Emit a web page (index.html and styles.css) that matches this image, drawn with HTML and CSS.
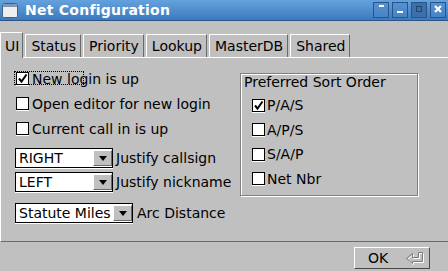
FILE: index.html
```html
<!DOCTYPE html>
<html lang="en">
<head>
    <meta charset="UTF-8">
    <title>Net Configuration</title>
    <link rel="stylesheet" href="styles.css">
</head>
<body>
    <header class="titlebar">
        <svg class="app-icon" width="16" height="15" viewBox="0 0 16 15">
            <rect x="0.5" y="0.5" width="15" height="14" rx="2" fill="#e4e4e4" stroke="#3d5f88"/>
            <rect x="1" y="1" width="14" height="3" fill="#7f97b6"/>
            <rect x="1" y="4" width="14" height="10" rx="1" fill="#eeeeee"/>
        </svg>
        <span class="title">Net Configuration</span>
        <div class="wm-buttons">
            <span class="wm-btn"><svg width="14" height="14"><rect x="5" y="2" width="5" height="2" fill="#fff"/></svg></span>
            <span class="wm-btn"><svg width="14" height="14"><rect x="4" y="8" width="6" height="2" fill="#fff"/></svg></span>
            <span class="wm-btn dim"><svg width="14" height="14"><rect x="4.5" y="3.5" width="5" height="5" fill="#3b6ea6" stroke="#22476f"/></svg></span>
            <span class="wm-btn"><svg width="14" height="14"><path d="M4 3 L10 9 M10 3 L4 9" stroke="#fff" stroke-width="2.2"/></svg></span>
        </div>
    </header>

    <nav class="tabs">
        <span class="tab active">UI</span>
        <span class="tab">Status</span>
        <span class="tab">Priority</span>
        <span class="tab">Lookup</span>
        <span class="tab">MasterDB</span>
        <span class="tab">Shared</span>
    </nav>

    <section class="panel">
        <div class="left">
            <label class="check">
                <span class="focus-ring"></span>
                <span class="box"><svg width="11" height="11"><path d="M2 5.5 L4.5 8.5 L9.5 1.5" fill="none" stroke="#000" stroke-width="2"/></svg></span>
                New login is up
            </label>
            <label class="check"><span class="box"></span>Open editor for new login</label>
            <label class="check"><span class="box"></span>Current call in is up</label>

            <div class="combo-row first">
                <span class="combo"><span class="value">RIGHT</span><span class="drop"><i></i></span></span>
                <span class="combo-label">Justify callsign</span>
            </div>
            <div class="combo-row second">
                <span class="combo"><span class="value">LEFT</span><span class="drop"><i></i></span></span>
                <span class="combo-label">Justify nickname</span>
            </div>
            <div class="combo-row third">
                <span class="combo wide"><span class="value">Statute Miles</span><span class="drop"><i></i></span></span>
                <span class="combo-label">Arc Distance</span>
            </div>
        </div>

        <div class="group">
            <div class="group-title">Preferred Sort Order</div>
            <div class="group-rows">
                <label class="check small"><span class="box"><svg width="11" height="11"><path d="M2 5.5 L4.5 8.5 L9.5 1.5" fill="none" stroke="#000" stroke-width="2"/></svg></span>P/A/S</label>
                <label class="check small"><span class="box"></span>A/P/S</label>
                <label class="check small"><span class="box"></span>S/A/P</label>
                <label class="check small"><span class="box"></span>Net Nbr</label>
            </div>
        </div>
    </section>

    <footer class="footer">
        <button class="ok">
            <span>OK</span>
            <svg class="return" width="18" height="13" viewBox="0 0 18 13">
                <path d="M13.5 1.5 L17.5 1.5 L17.5 10.5 L7.5 10.5 L7.5 12.5 L1.5 7.5 L7.5 2.5 L7.5 6.5 L13.5 6.5 Z" fill="none" stroke="#fff"/>
                <path d="M12.5 0.5 L16.5 0.5 L16.5 9.5 L6.5 9.5 L6.5 11.5 L0.5 6.5 L6.5 1.5 L6.5 5.5 L12.5 5.5 Z" fill="none" stroke="#7a7a7a"/>
            </svg>
        </button>
    </footer>
</body>
</html>
```

FILE: styles.css
```css
* {
    box-sizing: border-box;
}
body {
    margin: 0;
    width: 448px;
    height: 271px;
    overflow: hidden;
    background: #c0c0c0;
    color: #000;
    font-family: "DejaVu Sans", sans-serif;
    font-size: 14px;
    line-height: 16px;
}

/* title bar */
.titlebar {
    height: 21px;
    display: flex;
    align-items: center;
    padding: 0 2px;
    background: linear-gradient(#64a2de, #3c79bd);
    border-bottom: 1px solid #2a5585;
}
.app-icon { margin-right: 7px; }
.title {
    flex: 1;
    color: #fff;
    font-weight: bold;
    letter-spacing: 0.25px;
}
.wm-buttons {
    display: flex;
    gap: 3px;
}
.wm-btn {
    width: 16px;
    height: 16px;
    border: 1px solid #27558a;
    background: linear-gradient(#5692d1, #4782c4);
}
.wm-btn svg { display: block; }
.wm-btn.dim { background: #3e70a8; }

/* tabs */
.tabs {
    height: 37px;
    display: flex;
    align-items: flex-end;
    border-bottom: 1px solid #fff;
}
.tab {
    height: 23px;
    margin-right: 2px;
    padding: 3px 4px 0 5px;
    border-top: 1px solid #fff;
    border-left: 1px solid #fff;
    border-right: 1px solid #6a6a6a;
}
.tab.active {
    height: 26px;
    margin-bottom: -1px;
    padding: 5px 3px 0 4px;
    background: #c0c0c0;
}

/* main panel */
.panel {
    height: 184px;
    display: flex;
    border-left: 1px solid #fff;
    border-bottom: 1px solid #6a6a6a;
}
.left {
    width: 239px;
    padding-top: 8px;
}
.check {
    position: relative;
    height: 25px;
    display: flex;
    align-items: center;
    padding-left: 15px;
}
.box {
    width: 13px;
    height: 13px;
    margin-right: 3px;
    background: #fff;
    border: 1px solid #000;
    box-shadow: 0 1px 0 #fff;
}
.box svg { display: block; }
.focus-ring {
    position: absolute;
    left: 13px;
    top: 5px;
    width: 70px;
    height: 14px;
    border: 1px dotted #000;
}

.combo-row {
    display: flex;
    align-items: center;
    padding-left: 14px;
}
.combo-row.first { margin-top: 7px; }
.combo-row.second { margin-top: 4px; }
.combo-row.third { margin-top: 11px; }
.combo {
    width: 98px;
    height: 20px;
    display: flex;
    align-items: center;
    padding: 1px 0 1px 0;
    background: #fff;
    border: 1px solid #000;
    box-shadow: 0 1px 0 #fff;
}
.combo.wide { width: 118px; }
.value {
    flex: 1;
    padding-left: 3px;
    white-space: nowrap;
}
.drop {
    width: 19px;
    height: 16px;
    display: flex;
    align-items: center;
    justify-content: center;
    background: #c0c0c0;
    border: 1px solid;
    border-color: #fff #6a6a6a #6a6a6a #fff;
}
.drop i {
    width: 0;
    height: 0;
    border-style: solid;
    border-width: 5px 4px 0;
    border-color: #000 transparent transparent;
}
.combo-label { margin-left: 3px; }
.combo.wide + .combo-label { margin-left: 4px; }

/* sort order group */
.group {
    width: 178px;
    height: 123px;
    margin-top: 15px;
    padding-left: 3px;
    border: 1px solid #808080;
    box-shadow: inset 1px 1px 0 #fff, 1px 1px 0 #fff;
}
.group-rows { margin-top: 3px; }
.check.small {
    height: 24.5px;
    padding-left: 8px;
}
.check.small .box { margin-right: 2px; }

/* footer */
.footer {
    display: flex;
    justify-content: flex-end;
    padding: 5px 18px 0 0;
}
.ok {
    width: 76px;
    height: 22px;
    display: flex;
    align-items: center;
    padding: 0 5px 0 13px;
    background: #c0c0c0;
    border: 1px solid;
    border-color: #fff #4a4a4a #4a4a4a #fff;
    font: inherit;
    color: #000;
}
.ok .return { margin-left: auto; }
```
